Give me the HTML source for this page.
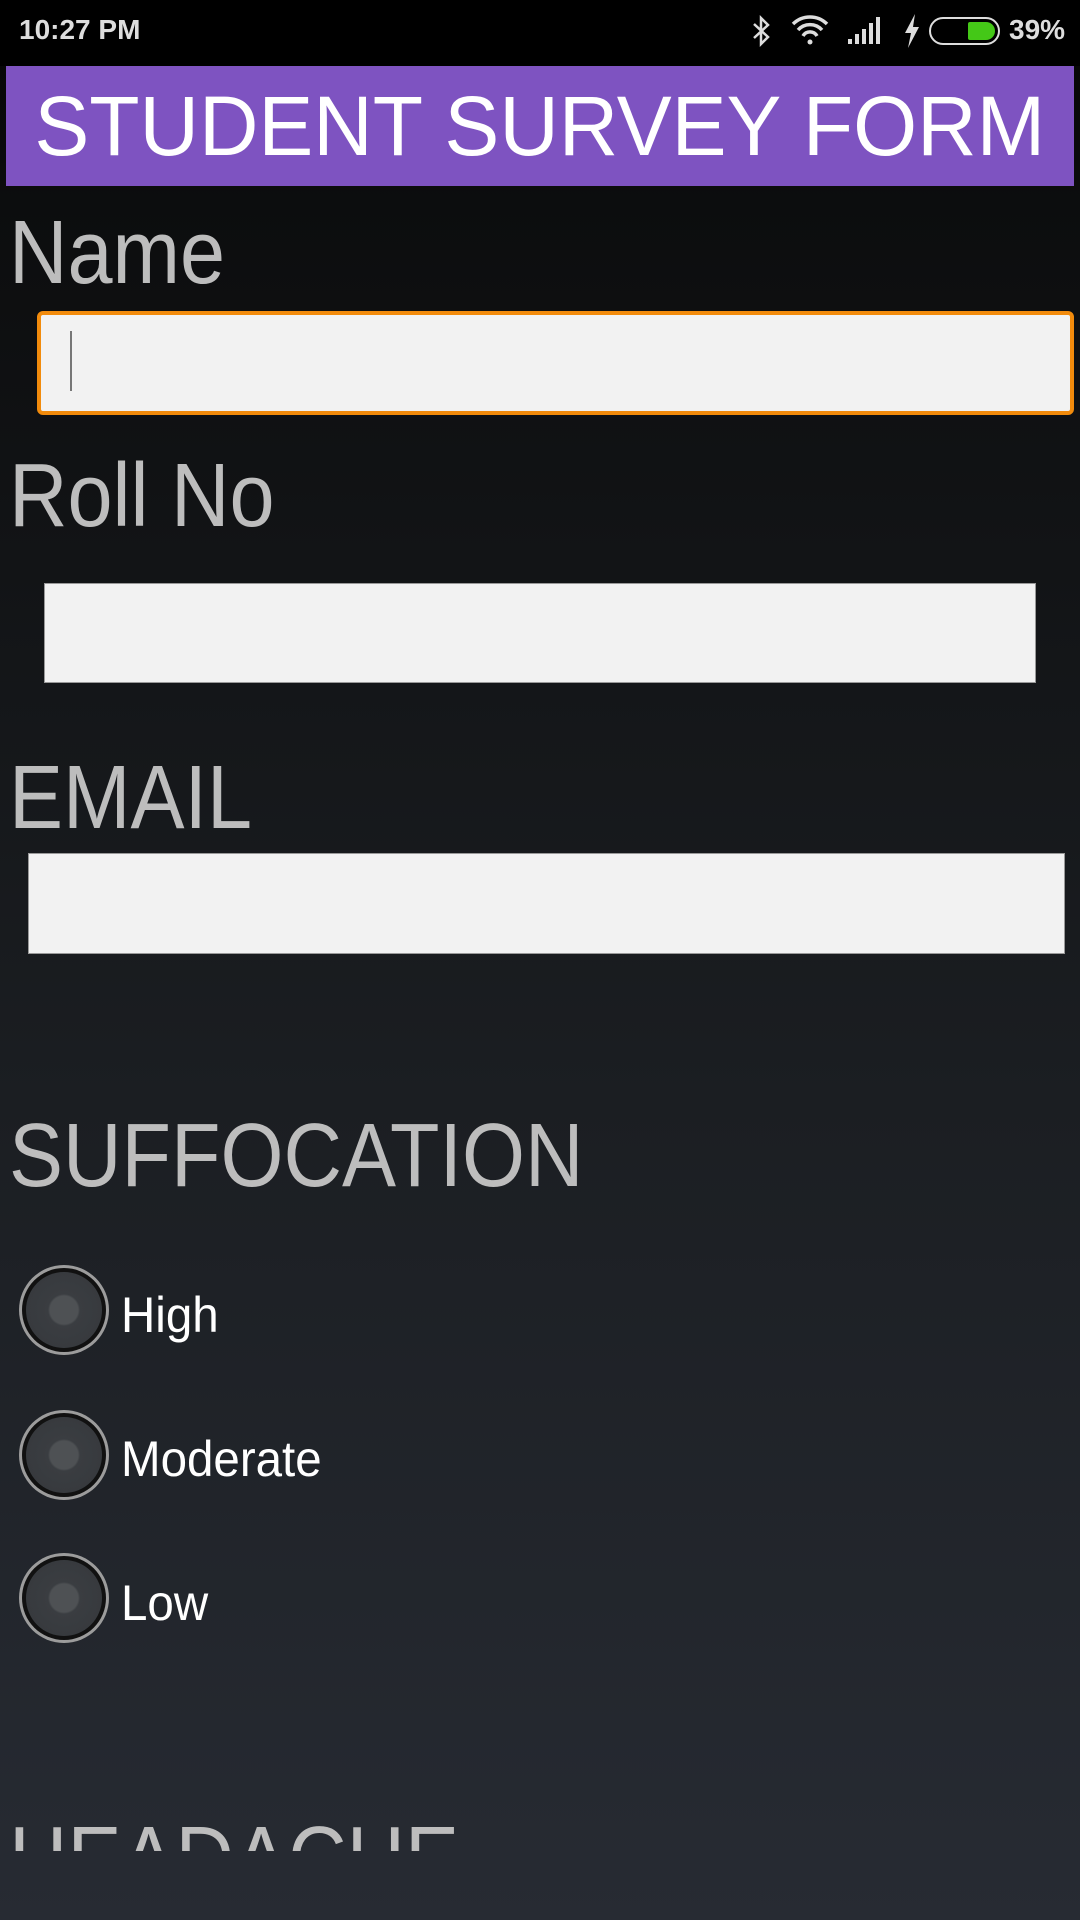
<!DOCTYPE html>
<html><head><meta charset="utf-8"><style>
*{margin:0;padding:0;box-sizing:border-box}
body{width:1080px;height:1920px;overflow:hidden;position:relative;font-family:"Liberation Sans",sans-serif;background:linear-gradient(#070707 70px,#0c0d0e 200px,#1b1e22 1100px,#272b33 1920px)}
.sb{position:absolute;left:0;top:0;width:1080px;height:66px;background:#000;color:#ddd;font-weight:bold;font-size:28px}
.t{position:absolute;left:6px;top:66px;width:1068px;height:120px;background:#7e53c1;color:#fff;font-size:84px;line-height:120px;text-align:center;white-space:nowrap}
.t span{display:inline-block;transform:scaleX(0.98)}
.l{position:absolute;left:9px;color:#bdbdbd;font-size:90px;line-height:1;white-space:nowrap;transform:scaleX(0.9);transform-origin:0 0}
.in{position:absolute;background:#f2f2f2;border:1px solid #999}
.r{position:absolute;left:19px;width:90px;height:90px;border-radius:50%;background:#9c9c9c;padding:3px}
.r div{width:100%;height:100%;border-radius:50%;background:#111;padding:4px}
.r div div{background:radial-gradient(circle,#4e5154 0 14px,#3a3d41 16px,#35383c 100%);padding:0}
.rl{position:absolute;left:121px;color:#fff;font-size:50px;line-height:1;transform:scaleX(0.95);transform-origin:0 0}
</style></head><body>
<div class="sb">
<span style="position:absolute;left:19px;top:14px">10:27 PM</span>
<svg style="position:absolute;left:750px;top:15px" width="24" height="32" viewBox="0 0 24 32" fill="none" stroke="#ddd" stroke-width="2.5"><path d="M4 9l14 13-7 7V3l7 7L4 23"/></svg>
<svg style="position:absolute;left:790px;top:14px" width="40" height="32" viewBox="0 0 40 32" fill="none" stroke="#ddd" stroke-width="3.5"><path d="M3 10a24 24 0 0 1 34 0M8 16a16 16 0 0 1 24 0M13 22a8 8 0 0 1 14 0"/><circle cx="20" cy="28" r="2.5" fill="#ddd" stroke="none"/></svg>
<svg style="position:absolute;left:848px;top:16px" width="38" height="28" viewBox="0 0 38 28" fill="#ddd"><rect x="0" y="23" width="4" height="5"/><rect x="7" y="18" width="4" height="10"/><rect x="14" y="13" width="4" height="15"/><rect x="21" y="7" width="4" height="21"/><rect x="28" y="1" width="4" height="27"/></svg>
<svg style="position:absolute;left:903px;top:14px" width="18" height="34" viewBox="0 0 18 34" fill="#ddd"><path d="M12 0L2 19h6l-3 15L16 13h-6z"/></svg>
<div style="position:absolute;left:929px;top:17px;width:71px;height:28px;border:2px solid #ddd;border-radius:14px"><div style="position:absolute;right:3px;top:3px;width:27px;height:18px;background:#44c817;border-radius:2px 9px 9px 2px"></div></div>
<span style="position:absolute;left:1009px;top:14px">39%</span>
</div>
<div class="t"><span>STUDENT SURVEY FORM</span></div>
<div class="l" style="top:208px">Name</div>
<div class="in" style="left:37px;top:311px;width:1037px;height:104px;border:4px solid #f28b0c;border-radius:6px;background:#f2f2f2"><div style="position:absolute;left:29px;top:16px;width:2px;height:60px;background:#777"></div></div>
<div class="l" style="top:451px">Roll No</div>
<div class="in" style="left:44px;top:583px;width:992px;height:100px"></div>
<div class="l" style="top:753px">EMAIL</div>
<div class="in" style="left:28px;top:853px;width:1037px;height:101px"></div>
<div class="l" style="top:1111px">SUFFOCATION</div>
<div class="r" style="top:1265px"><div><div></div></div></div><div class="rl" style="top:1290px">High</div>
<div class="r" style="top:1410px"><div><div></div></div></div><div class="rl" style="top:1434px">Moderate</div>
<div class="r" style="top:1553px"><div><div></div></div></div><div class="rl" style="top:1578px">Low</div>
<div style="position:absolute;left:0;top:1808px;width:1080px;height:43px;overflow:hidden"><div class="l" style="top:6px">HEADACHE</div></div>
</body></html>
